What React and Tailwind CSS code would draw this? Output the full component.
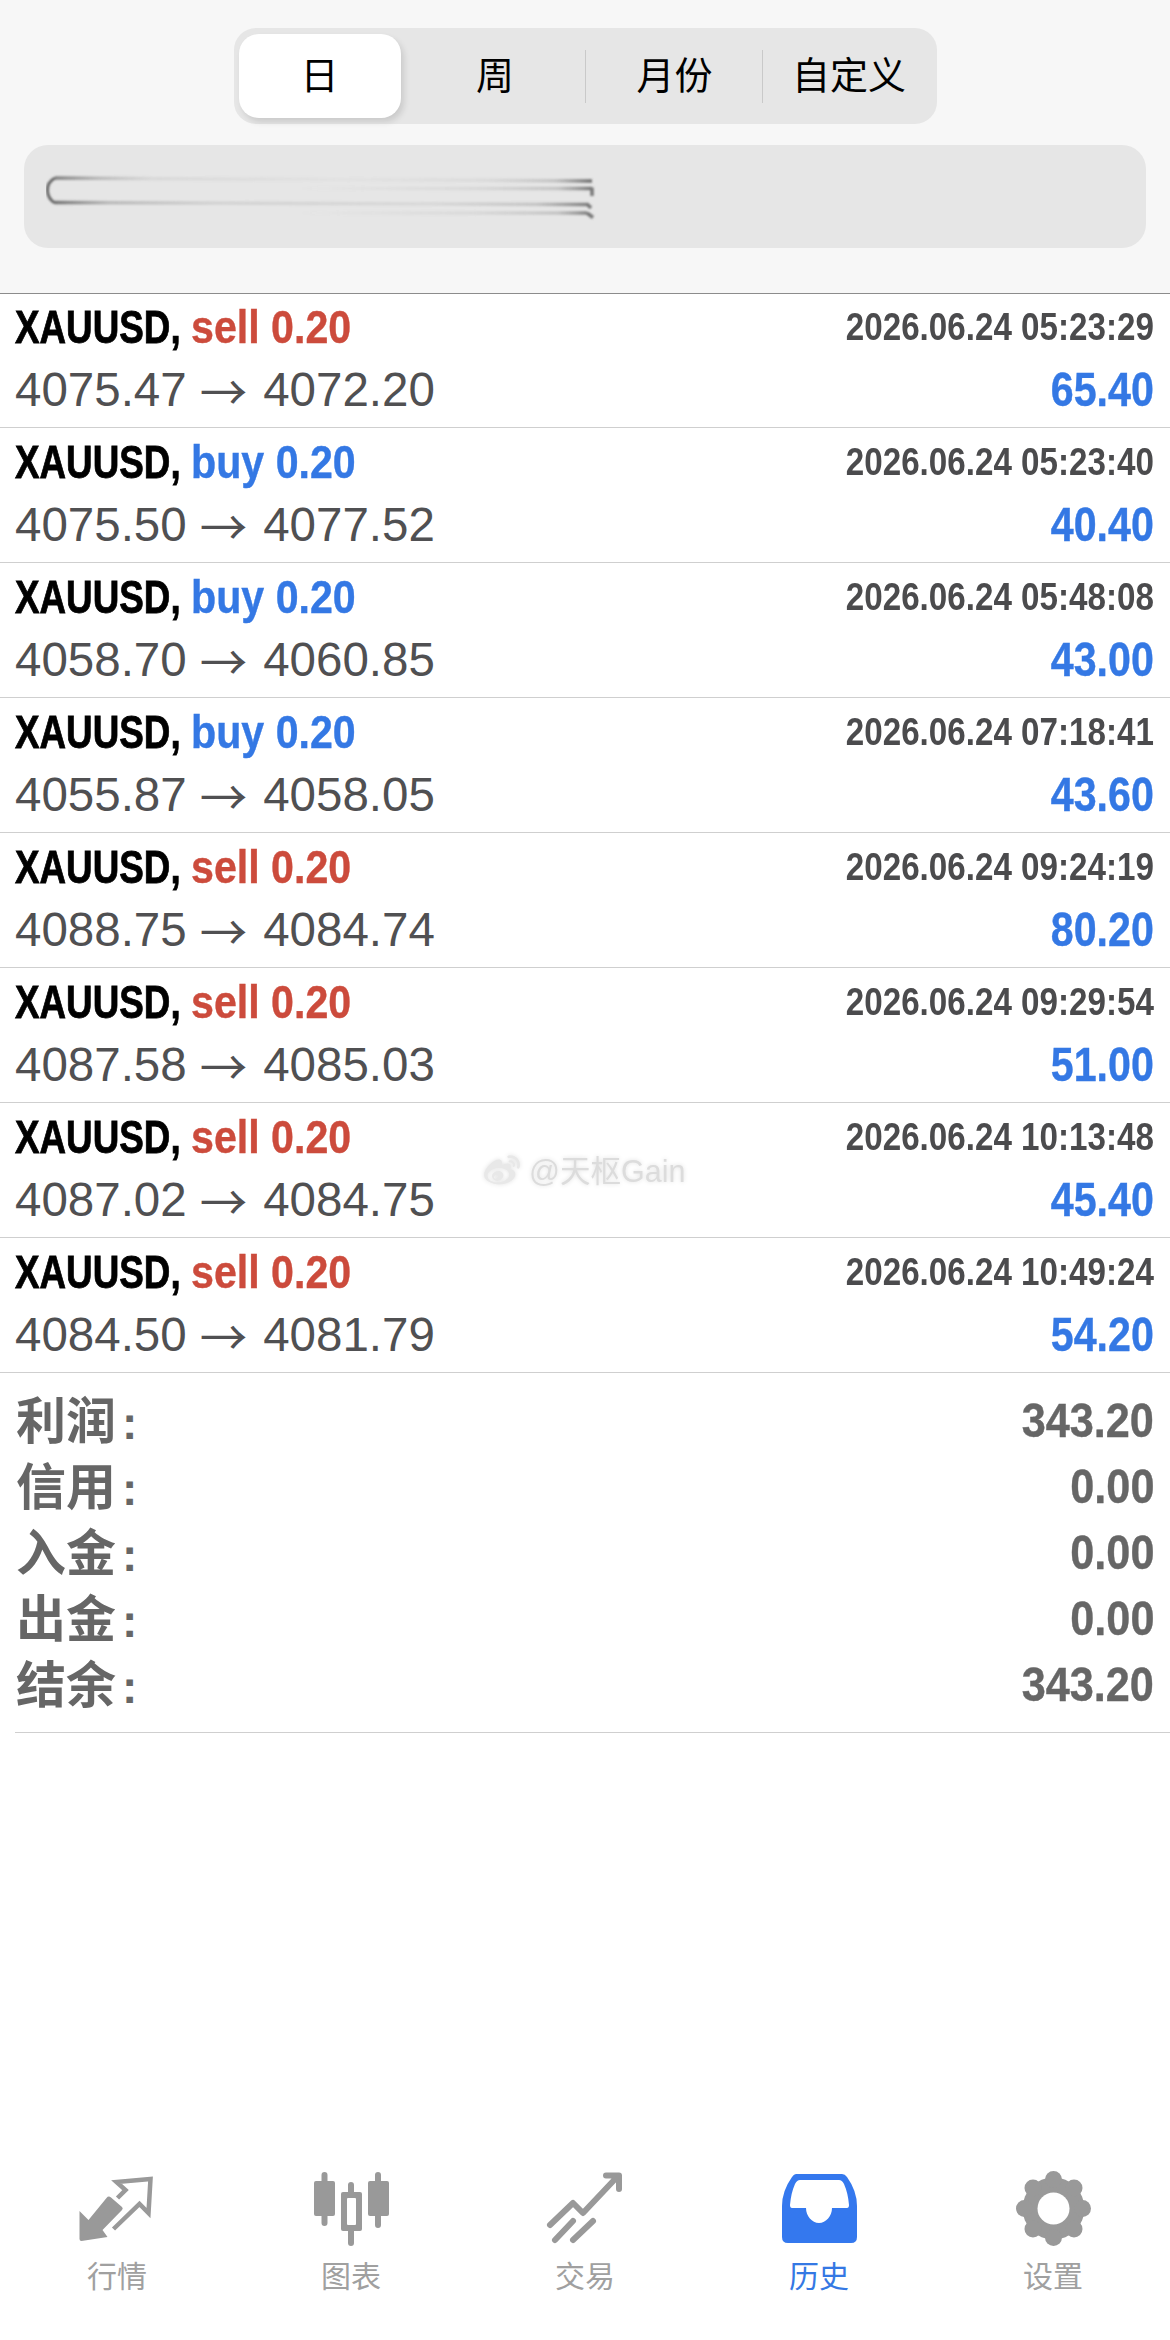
import React from "react";
import { FaWeibo } from "react-icons/fa";

const rows = [
  ["sell", "2026.06.24 05:23:29", "4075.47", "4072.20", "65.40"],
  ["buy", "2026.06.24 05:23:40", "4075.50", "4077.52", "40.40"],
  ["buy", "2026.06.24 05:48:08", "4058.70", "4060.85", "43.00"],
  ["buy", "2026.06.24 07:18:41", "4055.87", "4058.05", "43.60"],
  ["sell", "2026.06.24 09:24:19", "4088.75", "4084.74", "80.20"],
  ["sell", "2026.06.24 09:29:54", "4087.58", "4085.03", "51.00"],
  ["sell", "2026.06.24 10:13:48", "4087.02", "4084.75", "45.40"],
  ["sell", "2026.06.24 10:49:24", "4084.50", "4081.79", "54.20"],
];

const summary = [
  ["利润", "343.20"],
  ["信用", "0.00"],
  ["入金", "0.00"],
  ["出金", "0.00"],
  ["结余", "343.20"],
];

function Artefact() {
  return (
    <svg width="560" height="50" viewBox="46 172 560 50" fill="none">
      <defs>
        <linearGradient id="a" gradientUnits="userSpaceOnUse" x1="55" y1="0" x2="592" y2="0">
          <stop offset="0" stopColor="#555" stopOpacity=".7" />
          <stop offset=".08" stopColor="#777" stopOpacity=".4" />
          <stop offset=".18" stopColor="#888" stopOpacity=".14" />
          <stop offset=".55" stopColor="#999" stopOpacity=".05" />
          <stop offset=".8" stopColor="#888" stopOpacity=".12" />
          <stop offset=".93" stopColor="#777" stopOpacity=".3" />
          <stop offset="1" stopColor="#555" stopOpacity=".85" />
        </linearGradient>
        <linearGradient id="b" gradientUnits="userSpaceOnUse" x1="55" y1="0" x2="590" y2="0">
          <stop offset="0" stopColor="#555" stopOpacity=".8" />
          <stop offset=".1" stopColor="#777" stopOpacity=".4" />
          <stop offset=".3" stopColor="#888" stopOpacity=".2" />
          <stop offset=".7" stopColor="#888" stopOpacity=".14" />
          <stop offset=".9" stopColor="#777" stopOpacity=".3" />
          <stop offset="1" stopColor="#555" stopOpacity=".75" />
        </linearGradient>
        <linearGradient id="c" gradientUnits="userSpaceOnUse" x1="300" y1="0" x2="592" y2="0">
          <stop offset="0" stopColor="#999" stopOpacity="0" />
          <stop offset=".6" stopColor="#888" stopOpacity=".14" />
          <stop offset=".88" stopColor="#777" stopOpacity=".3" />
          <stop offset="1" stopColor="#555" stopOpacity=".8" />
        </linearGradient>
        <filter id="s" x="-5%" y="-50%" width="110%" height="200%">
          <feGaussianBlur stdDeviation="0.9" />
        </filter>
      </defs>
      <g filter="url(#s)" strokeWidth="3.5">
        <path d="M55 178 Q47 182 47.5 191 Q48 199 55 203" stroke="#666" strokeWidth="3" />
        <path d="M55 178 L592 181" stroke="url(#a)" />
        <path d="M55 202.5 L588 204.5" stroke="url(#b)" />
        <path d="M300 188.5 L592 188.5" stroke="url(#c)" />
        <path d="M300 213 L587 213" stroke="url(#c)" />
        <path d="M592 187.5 L592 196" stroke="#777" />
        <path d="M587 204 L591 208" stroke="#777" />
        <path d="M587 213 L593 217.5" stroke="#777" />
      </g>
    </svg>
  );
}

function MarketIcon() {
  return (
    <svg width="100" height="85" viewBox="-2.5 0 100 85" fill="none">
      <path d="M10 45 L19 54 L37 32 Q39 29.5 41.5 31.5 L52.5 41 Q54 42.5 52.5 44 L33 64 L38 71 L12 75 Q10 75 10 73 Z" fill="#999" />
      <path d="M48 32 L56 24 L47 16 L81 13 L79 47 L70 38 L44 63" stroke="#999" strokeWidth="4.5" />
    </svg>
  );
}

function ChartIcon() {
  return (
    <svg width="100" height="85" viewBox="0 0 100 85" fill="none">
      <path d="M23.5 9 V57 M50 19 V77 M77 9 V59" stroke="#999" strokeWidth="6" strokeLinecap="round" />
      <rect x="13" y="15" width="21" height="35" rx="2" fill="#999" />
      <rect x="40" y="26" width="21" height="39" rx="2" fill="#999" />
      <rect x="67" y="15" width="21" height="35" rx="2" fill="#999" />
      <rect x="46" y="32" width="9" height="27" rx="1" fill="#fff" />
    </svg>
  );
}

function TradeIcon() {
  return (
    <svg width="100" height="85" viewBox="0 0 100 85" fill="none">
      <path d="M15 59 L38 37 L48 47 L82 11 M71 9.5 H84 V23" stroke="#999" strokeWidth="6" strokeLinecap="round" strokeLinejoin="round" />
      <path d="M20 74 L38 55 M38 74 L58 55" stroke="#999" strokeWidth="6" strokeLinecap="round" />
    </svg>
  );
}

function HistoryIcon() {
  return (
    <svg width="75" height="69" viewBox="0 0 75 69">
      <path d="M14 0 H60 Q63 0 65 3 Q75 17 75 32 V63 Q75 69 69 69 H6 Q0 69 0 63 V32 Q0 17 10 3 Q12 0 14 0 Z" fill="#3478ee" />
      <path d="M18 6 H57 Q60 6 62 10 Q66 19 67 31 Q67 34 65 34 H50 C50 42 44 49 37 49 C30 49 24 42 24 34 H10 Q8 34 8 31 Q9 19 13 10 Q15 6 18 6 Z" fill="#fff" />
    </svg>
  );
}

function GearIcon() {
  const angles = [0, 45, 90, 135, 180, 225, 270, 315];
  return (
    <svg width="75" height="75" viewBox="0 0 75 75">
      <circle cx="37.5" cy="37.5" r="31" fill="#999" />
      {angles.map((a) => (
        <circle key={a} cx="37.5" cy="8.5" r="8.5" fill="#999" transform={`rotate(${a} 37.5 37.5)`} />
      ))}
      <circle cx="37.5" cy="37.5" r="16" fill="#fff" />
    </svg>
  );
}

const tabs = [
  ["行情", <MarketIcon />, false],
  ["图表", <ChartIcon />, false],
  ["交易", <TradeIcon />, false],
  ["历史", <HistoryIcon />, true],
  ["设置", <GearIcon />, false],
];

export default function App() {
  return (
    <div className="relative flex min-h-[2340px] w-[1170px] flex-col overflow-hidden bg-white [font-family:'Liberation_Sans','Noto_Sans_CJK_SC',sans-serif]">
      <header className="flex h-[293px] flex-col items-center bg-[#f7f7f7] pt-[28px] shadow-[0_1px_0_#8c8c8c]">
        <div className="flex h-[96px] w-[703px] items-center rounded-[22px] bg-[#e6e6e6] pl-[5px] text-[38px] leading-none text-black">
          <div className="flex h-[84px] w-[162px] items-center justify-center rounded-[20px] bg-white shadow-[3px_4px_6px_rgba(0,0,0,0.12)]">日</div>
          <div className="flex w-[184px] items-center justify-center pl-[5px]">周</div>
          <div className="h-[53px] w-px bg-[#c9c9c9]" />
          <div className="flex w-[176px] items-center justify-center pl-[2px]">月份</div>
          <div className="h-[53px] w-px bg-[#c9c9c9]" />
          <div className="flex w-[173px] items-center justify-center">自定义</div>
        </div>
        <div className="mt-[21px] flex h-[103px] w-[1122px] items-start rounded-[24px] bg-[#e6e6e6] pl-[22px] pt-[27px]">
          <Artefact />
        </div>
      </header>

      <main>
        {rows.map(([side, date, from, to, profit]) => (
          <div key={date} className="flex h-[135px] flex-col border-b border-[#cfcfcf] pl-[15px] pr-[16px]">
            <div className="flex h-[65px] items-center justify-between pt-[2px] text-[46px] font-bold leading-none whitespace-nowrap">
              <div className="flex">
                <span className="inline-block w-[176px] origin-left scale-x-[.8] text-black [-webkit-text-stroke:0.8px_#000]">XAUUSD,</span>
                <span className={`inline-block origin-left scale-x-[.895] ${side === "sell" ? "text-[#cc4b3c] [-webkit-text-stroke:0.4px_#cc4b3c]" : "text-[#3478e4] [-webkit-text-stroke:0.4px_#3478e4]"}`}>
                  {side} 0.20
                </span>
              </div>
              <span className="inline-block origin-right scale-x-[.873] text-[38px] text-[#4b4b4d]">{date}</span>
            </div>
            <div className="flex h-[63px] items-center justify-between whitespace-nowrap text-[47.5px] leading-none">
              <span className="flex items-center text-[#505052]">
                {from}
                <span className="ml-[13px] mr-[16px] [font-family:'Noto_Sans_CJK_SC',sans-serif]">→</span>
                {to}
              </span>
              <span className="inline-block origin-right scale-x-[.867] font-bold text-[#3478e4] [-webkit-text-stroke:0.4px_#3478e4]">{profit}</span>
            </div>
          </div>
        ))}
      </main>

      <section className="ml-[15px] border-b border-[#cfcfcf] pb-[13px] pr-[16px] pt-[16px]">
        {summary.map(([label, value], i) => (
          <div key={i} className="flex h-[66px] items-center justify-between whitespace-nowrap font-bold leading-none text-[#666]">
            <span className="ml-[1px] text-[50px]">
              {label}
              <span className="ml-[6px] text-[46px]">:</span>
            </span>
            <span className="mb-[2px] inline-block origin-right scale-x-[.9] text-[48px] [-webkit-text-stroke:0.4px_#666]">{value}</span>
          </div>
        ))}
      </section>

      <nav className="mt-auto grid h-[170px] grid-cols-5">
        {tabs.map(([label, icon, active]) => (
          <div key={label} className="flex flex-col items-center">
            <div className="flex h-[76px] items-center justify-center">{icon}</div>
            <span className={`mt-[13px] text-[30px] leading-[36px] ${active ? "text-[#3478e4]" : "text-[#a0a0a0]"}`}>{label}</span>
          </div>
        ))}
      </nav>

      <div className="absolute left-[481px] top-[1153px] flex items-center gap-[6px] text-[#dcdcdc] [filter:drop-shadow(0_0_2px_rgba(0,0,0,0.12))]">
        <FaWeibo className="h-[36px] w-[42px] text-[#e8e8e8]" />
        <span className="text-[30.5px] leading-none">@天枢Gain</span>
      </div>
    </div>
  );
}
